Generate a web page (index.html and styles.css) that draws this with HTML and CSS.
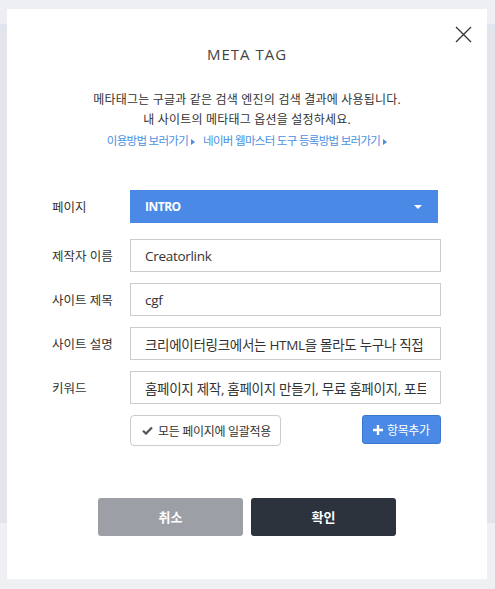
FILE: index.html
```html
<html>
<head><title>Meta Tag</title>
<meta name="viewport" content="width=device-width, initial-scale=1.0">
<link rel="stylesheet" href="styles.css">
</head>
<body>
<div class="modal">
	<div class="close">
		<svg width="17" height="17" viewBox="0 0 17 17"><path d="M1 1L16 16M16 1L1 16" stroke="#333" stroke-width="1.3" fill="none"/></svg>
	</div>
	<div class="title">META TAG</div>
	<div class="desc">
		<p>메타태그는 구글과 같은 검색 엔진의 검색 결과에 사용됩니다.</p>
		<p>내 사이트의 메타태그 옵션을 설정하세요.</p>
		<p class="links"><a>이용방법 보러가기<span class="tri"></span></a><a>네이버 웹마스터 도구 등록방법 보러가기<span class="tri"></span></a></p>
	</div>
	<div class="form">
		<div class="row first">
			<label>페이지</label>
			<div class="select">INTRO<span class="caret"></span></div>
		</div>
		<div class="row">
			<label>제작자 이름</label>
			<input class="input" type="text" value="Creatorlink" readonly>
		</div>
		<div class="row">
			<label>사이트 제목</label>
			<input class="input" type="text" value="cgf" readonly>
		</div>
		<div class="row">
			<label>사이트 설명</label>
			<input class="input" type="text" value="크리에이터링크에서는 HTML을 몰라도 누구나 직접 홈페이지를" readonly>
		</div>
		<div class="row">
			<label>키워드</label>
			<input class="input" type="text" value="홈페이지 제작, 홈페이지 만들기, 무료 홈페이지, 포트폴리오" readonly>
		</div>
		<div class="tools">
			<div class="btn-apply">
				<svg width="11" height="9" viewBox="0 0 11 9"><path d="M1 4.8L4 7.6L10 1.4" stroke="#555" stroke-width="2.2" fill="none"/></svg>
				모든 페이지에 일괄적용
			</div>
			<div class="btn-add">
				<svg width="10" height="10" viewBox="0 0 10 10"><path d="M5 0V10M0 5H10" stroke="#fff" stroke-width="2.4"/></svg>
				항목추가
			</div>
		</div>
	</div>
	<div class="footer">
		<div class="btn cancel">취소</div>
		<div class="btn ok">확인</div>
	</div>
</div>
</body>
</html>
```
FILE: styles.css
```css
body
{
	margin: 0;
	height: 589px;
	overflow: hidden;
	font-family: "Open Sans", "Noto Sans CJK KR", sans-serif;
	color: #333;
	background: linear-gradient(#eeeff3 0, #eeeff3 24px, #dfe4f2 24px, #dfe4f2 26px, #e4e5ec 26px, #e4e5ec 523px, #eef0f4 523px);
}
.modal
{
	position: relative;
	margin: 9px 0 0 7px;
	width: 480px;
	height: 570px;
	background: #fff;
	box-sizing: border-box;
	padding-top: 34px;
}
.close
{
	position: absolute;
	top: 17px;
	right: 15px;
	width: 17px;
	height: 17px;
}
.title
{
	text-align: center;
	font-size: 15px;
	letter-spacing: 1px;
	color: #444;
	line-height: 22px;
}
.desc
{
	margin-top: 25px;
	text-align: center;
	font-size: 12px;
	line-height: 20px;
	letter-spacing: 0.2px;
}
.desc p
{
	margin: 0;
}
.links
{
	margin-top: 1px !important;
	color: #4a90e2;
	font-size: 11.5px;
	letter-spacing: -0.7px;
}
.links a
{
	margin: 0 4px;
}
.tri
{
	display: inline-block;
	margin-left: 3px;
	border-left: 4px solid #4a90e2;
	border-top: 3.5px solid transparent;
	border-bottom: 3.5px solid transparent;
	vertical-align: 0;
}
.form
{
	margin-top: 39px;
	padding: 0 46px 0 45px;
}
.row
{
	display: flex;
	align-items: center;
	height: 33px;
	margin-bottom: 11px;
}
.row.first
{
	margin-bottom: 16px;
}
.row label
{
	width: 78px;
	font-size: 12.5px;
	letter-spacing: 0;
}
.select
{
	position: relative;
	width: 308px;
	height: 33px;
	line-height: 33px;
	box-sizing: border-box;
	padding-left: 15px;
	background: #4a89e6;
	color: #fff;
	font-size: 12px;
	font-weight: bold;
	letter-spacing: -0.5px;
}
.caret
{
	position: absolute;
	right: 16px;
	top: 15px;
	border-top: 4px solid #fff;
	border-left: 4px solid transparent;
	border-right: 4px solid transparent;
}
.input
{
	width: 311px;
	height: 33px;
	box-sizing: border-box;
	border: 1px solid #ccc;
	border-radius: 0;
	margin: 0;
	padding: 0 14px;
	font-family: "Open Sans", "Noto Sans CJK KR", sans-serif;
	font-size: 13.5px;
	letter-spacing: -0.3px;
	color: #333;
	outline: none;
	background: #fff;
}
.tools
{
	display: flex;
	justify-content: space-between;
	margin-left: 78px;
	margin-top: 7px;
}
.btn-apply
{
	display: flex;
	align-items: center;
	gap: 5px;
	height: 31px;
	width: 151px;
	box-sizing: border-box;
	border: 1px solid #ccc;
	border-radius: 4px;
	padding-left: 11px;
	font-size: 12px;
	letter-spacing: -0.3px;
	color: #333;
}
.btn-add
{
	display: flex;
	align-items: center;
	gap: 4px;
	height: 29px;
	width: 79px;
	box-sizing: border-box;
	border: 1px solid #3b77cc;
	border-radius: 3px;
	background: #4a89e6;
	padding-left: 10px;
	color: #fff;
	font-size: 12px;
	letter-spacing: -0.4px;
}
.footer
{
	display: flex;
	justify-content: center;
	gap: 8px;
	margin-top: 52px;
}
.btn
{
	width: 145px;
	height: 38px;
	line-height: 38px;
	border-radius: 3px;
	text-align: center;
	color: #fff;
	font-size: 13px;
	font-weight: bold;
}
.cancel
{
	background: #9c9fa6;
}
.ok
{
	background: #2d333d;
}
```
